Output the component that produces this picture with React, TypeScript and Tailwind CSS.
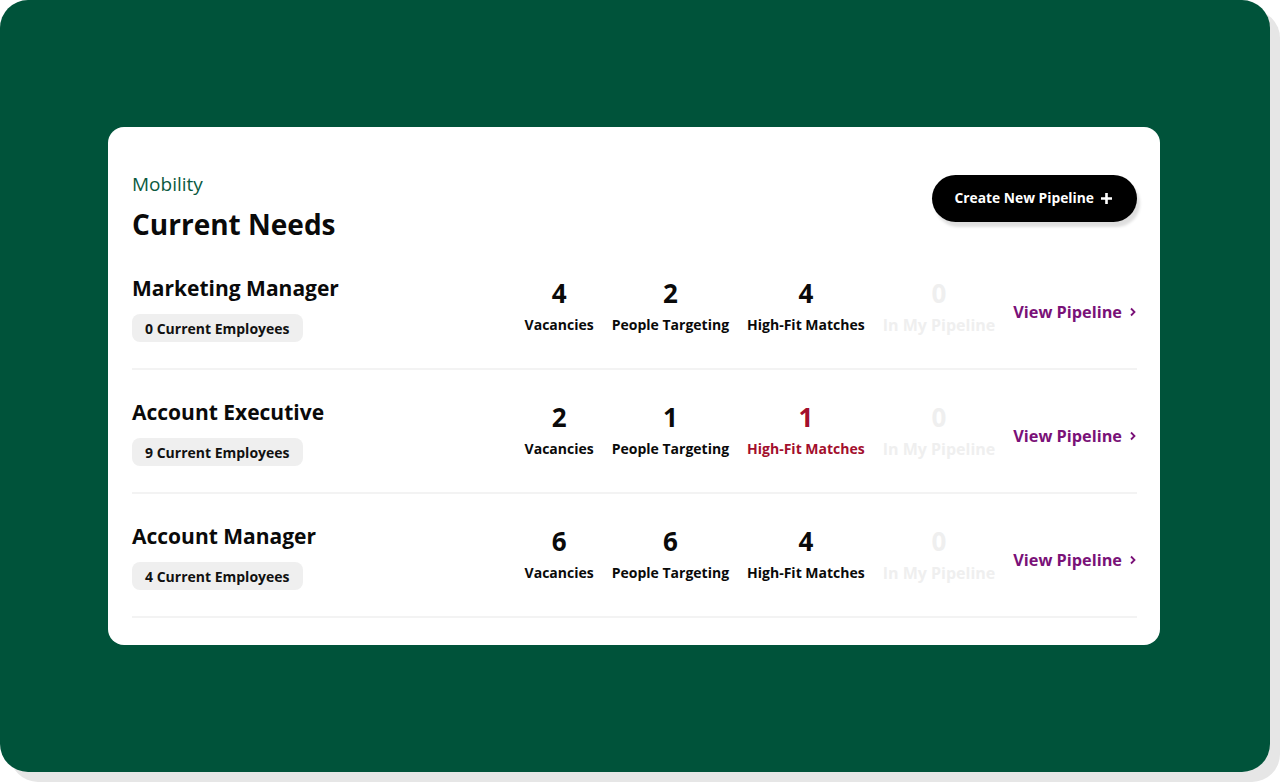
import React from "react";

type Row = {
  title: string;
  employees: number;
  vacancies: number;
  targeting: number;
  matches: number;
  pipeline: number;
  highlight?: boolean;
};

const rows: Row[] = [
  { title: "Marketing Manager", employees: 0, vacancies: 4, targeting: 2, matches: 4, pipeline: 0 },
  { title: "Account Executive", employees: 9, vacancies: 2, targeting: 1, matches: 1, pipeline: 0, highlight: true },
  { title: "Account Manager", employees: 4, vacancies: 6, targeting: 6, matches: 4, pipeline: 0 },
];

function Stat({ value, label, tone }: { value: number; label: string; tone: "dark" | "red" | "faint" }) {
  const color =
    tone === "red" ? "text-[#a30f2d]" : tone === "faint" ? "text-[#efefef]" : "text-[#0a0a0a]";
  return (
    <div className={`flex flex-col items-center ${color}`}>
      <div className="text-[26px] font-bold leading-[32px]">{value}</div>
      <div
        className={`mt-[6px] font-bold leading-[20px] whitespace-nowrap ${
          tone === "faint" ? "text-[16px]" : "text-[14px]"
        }`}
      >
        {label}
      </div>
    </div>
  );
}

export default function App() {
  return (
    <div
      className="w-[1280px] h-[782px] bg-white"
      style={{ fontFamily: '"Open Sans", "Noto Sans", sans-serif' }}
    >
      <div className="w-[1270px] h-[772px] rounded-[28px] bg-[#00533a] shadow-[10px_10px_0_0_#e6e6e6] flex items-center justify-center pr-[2px]">
        <div className="w-[1052px] bg-white rounded-[16px] pl-6 pr-[23px] pt-[43px] pb-[27px]">
          <div className="flex items-start justify-between mb-[2px]">
            <div>
              <div className="text-[19px] font-medium leading-[28px] text-[#0b5a3f]">Mobility</div>
              <div className="mt-[6px] text-[28px] font-bold leading-[40px] text-[#0a0a0a]">Current Needs</div>
            </div>
            <button className="mt-[5px] h-[47px] pl-[23px] pr-[24px] rounded-full bg-black text-white text-[13.8px] font-bold flex items-center gap-[6px] shadow-[3px_5px_3px_rgba(0,0,0,0.13)]">
              <span>Create New Pipeline</span>
              <svg width="13" height="13" viewBox="0 0 13 13" fill="none">
                <path d="M6.5 1v11M1 6.5h11" stroke="white" strokeWidth="2.6" />
              </svg>
            </button>
          </div>

          {rows.map((r) => (
            <div
              key={r.title}
              className="flex items-center pt-[28px] pb-[26px] border-b-2 border-[#f3f3f3]"
            >
              <div className="flex-1">
                <div className="text-[21px] font-bold leading-[28px] text-[#0a0a0a]">{r.title}</div>
                <div className="mt-[12px] inline-flex h-[28px] items-center rounded-[8px] bg-[#efefef] px-[13px] text-[14px] font-bold text-[#111]">
                  {r.employees} Current Employees
                </div>
              </div>
              <div className="flex items-center gap-[18px] mb-[5px]">
                <Stat value={r.vacancies} label="Vacancies" tone="dark" />
                <Stat value={r.targeting} label="People Targeting" tone="dark" />
                <Stat value={r.matches} label="High-Fit Matches" tone={r.highlight ? "red" : "dark"} />
                <Stat value={r.pipeline} label="In My Pipeline" tone="faint" />
              </div>
              <div className="ml-[18px] mt-[8px] flex items-center gap-[7px] text-[16.3px] font-bold text-[#7a1178]">
                <span>View Pipeline</span>
                <svg width="8" height="10" viewBox="0 0 8 10" fill="none">
                  <path d="M2 1.5L5.5 5L2 8.5" stroke="#7a1178" strokeWidth="1.8" />
                </svg>
              </div>
            </div>
          ))}
        </div>
      </div>
    </div>
  );
}
